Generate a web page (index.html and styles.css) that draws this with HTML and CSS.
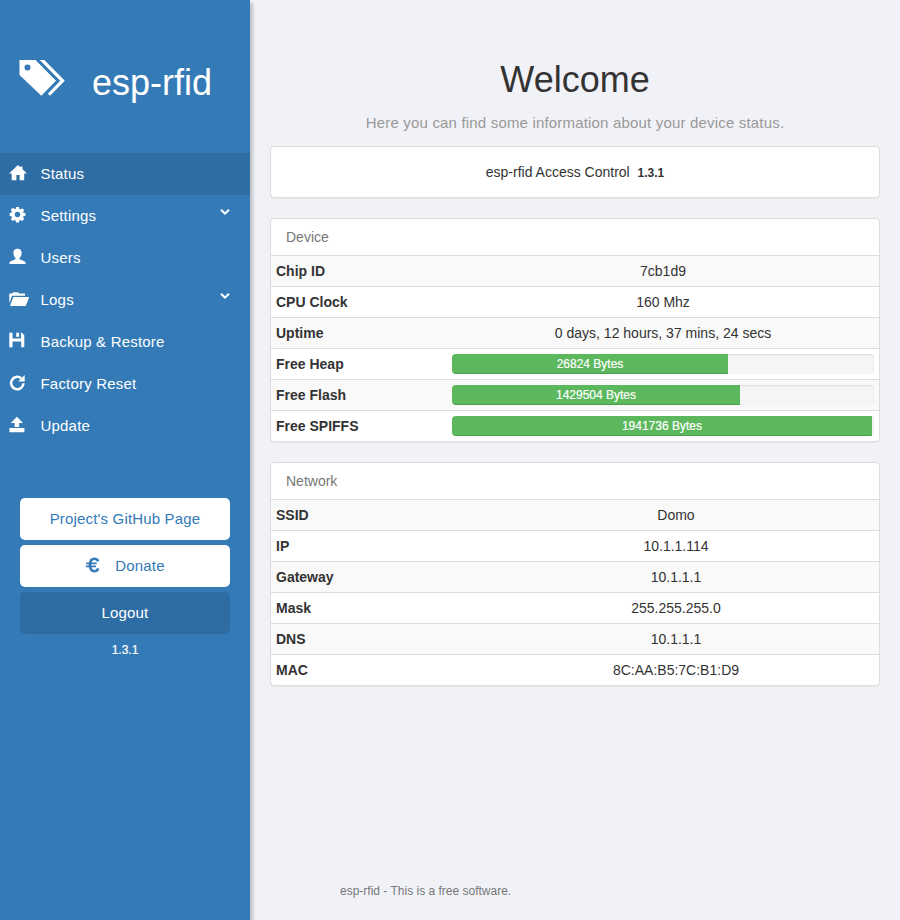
FILE: index.html
```html
<!DOCTYPE html>
<html lang="en">
<head>
<meta charset="utf-8">
<title>esp-rfid</title>
<link rel="stylesheet" href="styles.css">
</head>
<body>
<div class="layout">
  <nav class="sidebar">
    <header class="brand">
      <svg class="brand-icon" viewBox="0 0 48 38"><path fill-rule="evenodd" d="M1.5 1H17.5L38 21.7L23.3 36.8L1.5 16ZM9.5 5.5a3 3 0 1 0 0 6a3 3 0 1 0 0-6Z"/><path d="M21.7 1H26.3L46.8 21.8L32 36.8L29.8 34.7L42.2 21.7Z"/></svg>
      <h1>esp-rfid</h1>
    </header>
    <ul class="menu">
      <li class="active"><svg class="icon" viewBox="0 0 22 20"><path d="M10 1L12.2 3.2V2.5H14.5V5.2L19 9.4H16.2V16.2H11.6V11H8.4V16.2H3.7V9.4H1Z"/></svg>Status</li>
      <li><svg class="icon" viewBox="0 0 22 20"><path fill-rule="evenodd" d="M8 1h3l.4 2 1.1.5 1.7-1.2 2 2-1.1 1.8.4 1L17.4 7v2.9l-1.9.4-.4 1.1 1.1 1.7-2 2-1.7-1.1-1.1.5-.4 2H8l-.4-2-1.1-.5-1.7 1.1-2-2 1.1-1.7-.4-1.1L1.7 9.9V7l1.8-.4.4-1-1.1-1.8 2-2 1.7 1.2L7.6 3ZM9.5 5.8a2.7 2.7 0 1 0 0 5.4a2.7 2.7 0 1 0 0-5.4Z"/></svg>Settings<svg class="chevron" viewBox="0 0 10 8"><path d="M1 1.7L5 5.7L9 1.7"/></svg></li>
      <li><svg class="icon" viewBox="0 0 22 20"><path d="M9.5 .8C12 .8 13.8 2.3 13.6 5C13.5 7.3 12.8 8.8 11.5 10V11.3L15.8 13Q17.6 13.7 17.6 15V16H1.4V15Q1.4 13.7 3.2 13L7.5 11.3V10C6.2 8.8 5.5 7.3 5.4 5C5.2 2.3 7 .8 9.5 .8Z"/></svg>Users</li>
      <li><svg class="icon" viewBox="0 0 22 20"><path d="M1.3 3.5H4.3L5 2.2H10.2L11 3.5H17V5.8H5Q4 5.8 3.6 6.8L1.3 13.5ZM5.3 7H21.3L17.7 16H2Z"/></svg>Logs<svg class="chevron" viewBox="0 0 10 8"><path d="M1 1.7L5 5.7L9 1.7"/></svg></li>
      <li><svg class="icon" viewBox="0 0 22 20"><path d="M1.3 .8H4.5V6.5H13V.8H13.8L16.3 3.3V15.3H13.2V9.5H4.5V15.3H1.3ZM8.2 .8H11.2V4.8H8.2Z"/></svg>Backup &amp; Restore</li>
      <li><svg class="icon" viewBox="0 0 22 20"><path class="stroke" d="M13.2 4.2A6.2 6.2 0 1 0 15.5 9.2"/><path d="M16.7 1V7.5H10.2Z"/></svg>Factory Reset</li>
      <li><svg class="icon" viewBox="0 0 22 20"><path d="M8.9 .8L15 7H11.2V11.1H6.6V7H2.8ZM1.4 12H16.4V16.3H1.4Z"/></svg>Update</li>
    </ul>
    <div class="actions">
      <a class="button">Project's GitHub Page</a>
      <a class="button"><svg class="euro" viewBox="0 0 16 18"><path d="M13.2 5.4Q12.4 2.8 9.4 2.8Q5.2 2.8 5 9Q5.2 15.2 9.4 15.2Q12.4 15.2 13.2 12.4"/><path class="bar" d="M1.3 7.4H11.7M.8 10.4H11"/></svg>Donate</a>
      <a class="button dark">Logout</a>
      <small>1.3.1</small>
    </div>
  </nav>
  <main class="content">
    <h2>Welcome</h2>
    <p class="lead">Here you can find some information about your device status.</p>
    <section class="panel summary">esp-rfid Access Control&nbsp; <b>1.3.1</b></section>
    <section class="panel">
      <h3>Device</h3>
      <dl class="device">
        <div><dt>Chip ID</dt><dd>7cb1d9</dd></div>
        <div><dt>CPU Clock</dt><dd>160 Mhz</dd></div>
        <div><dt>Uptime</dt><dd>0 days, 12 hours, 37 mins, 24 secs</dd></div>
        <div><dt>Free Heap</dt><dd><div class="progress"><div class="fill" style="width:65.4%">26824 Bytes</div></div></dd></div>
        <div><dt>Free Flash</dt><dd><div class="progress"><div class="fill" style="width:68.25%">1429504 Bytes</div></div></dd></div>
        <div><dt>Free SPIFFS</dt><dd><div class="progress"><div class="fill" style="width:99.5%">1941736 Bytes</div></div></dd></div>
      </dl>
    </section>
    <section class="panel">
      <h3>Network</h3>
      <dl class="network">
        <div><dt>SSID</dt><dd>Domo</dd></div>
        <div><dt>IP</dt><dd>10.1.1.114</dd></div>
        <div><dt>Gateway</dt><dd>10.1.1.1</dd></div>
        <div><dt>Mask</dt><dd>255.255.255.0</dd></div>
        <div><dt>DNS</dt><dd>10.1.1.1</dd></div>
        <div><dt>MAC</dt><dd>8C:AA:B5:7C:B1:D9</dd></div>
      </dl>
    </section>
    <footer>esp-rfid - This is a free software.</footer>
  </main>
</div>
</body>
</html>
```
FILE: styles.css
```css
* { box-sizing: border-box; }
body {
  margin: 0;
  background: #f1f2f7;
  color: #333;
  font: 14px/20px "Liberation Sans", Arial, sans-serif;
}
h1, h2, h3, p, ul, dl, dd { margin: 0; padding: 0; font-weight: 400; }
.layout { display: flex; height: 920px; }
.sidebar {
  width: 250px;
  flex: none;
  background: #337ab7;
  color: #fff;
  box-shadow: 3px 3px 3px rgba(0, 0, 0, .2);
}
.brand { display: flex; height: 153px; padding: 59px 0 0 18px; }
.brand-icon { width: 48px; height: 38px; fill: #fff; }
.brand h1 { margin-left: 26px; font-size: 36px; line-height: 48px; }
.menu { list-style: none; }
.menu li {
  display: flex;
  height: 42px;
  padding: 11px 20px 0 8px;
  font-size: 15px;
  line-height: 19px;
  letter-spacing: .2px;
}
.menu .active { background: #2e6da4; }
.icon { width: 22px; height: 20px; margin-right: 10.5px; fill: #fff; }
.stroke { fill: none; stroke: #fff; stroke-width: 2.5; }
.chevron { width: 10px; height: 8px; margin: 2px 0 0 auto; fill: none; stroke: #fff; stroke-width: 2; }
.actions { display: flex; flex-direction: column; gap: 5px; padding: 51px 20px 0; text-align: center; }
.button {
  display: flex;
  align-items: center;
  justify-content: center;
  height: 42px;
  border-radius: 5px;
  background: #fff;
  color: #337ab7;
  font-size: 15px;
  letter-spacing: .17px;
}
.dark { background: #2e6da4; color: #fff; }
.euro { width: 16px; height: 18px; margin: -2px 14px 0 0; fill: none; stroke: #337ab7; stroke-width: 2.6; }
.euro .bar { stroke-width: 1.6; }
.actions small { font-size: 12px; line-height: 22px; -webkit-text-stroke: .2px #fff; }
.content { display: flex; flex: 1; flex-direction: column; padding: 60px 20px 0; }
h2 { font-size: 36px; line-height: 40px; text-align: center; }
.lead { margin: 13px 0; color: #999; font-size: 15px; letter-spacing: .18px; text-align: center; }
.panel {
  margin-bottom: 20px;
  border: 1px solid #ddd;
  border-radius: 4px;
  background: #fff;
  box-shadow: 0 1px 1px rgba(0, 0, 0, .05);
}
.summary { padding: 15px; text-align: center; }
.summary b { font-size: 12px; line-height: 1; }
h3 { padding: 10px 15px; color: #777; font-size: 14px; line-height: 16px; }
dl > div { display: flex; border-top: 1px solid #ddd; }
dl > div:nth-child(odd) { background: #f9f9f9; }
dt { padding: 5px; font-weight: 700; }
dd { flex: 1; padding: 5px; text-align: center; }
.device dt { width: 176px; }
.network dt { width: 202px; }
.progress {
  height: 20px;
  overflow: hidden;
  border-radius: 4px;
  background: #f5f5f5;
  box-shadow: inset 0 1px 2px rgba(0, 0, 0, .1);
}
.fill {
  height: 20px;
  background: #5cb85c;
  color: #fff;
  font-size: 12px;
  -webkit-text-stroke: .2px #fff;
  box-shadow: inset 0 -1px 0 rgba(0, 0, 0, .15);
}
footer { margin: auto 0 19px 70px; color: #777; font-size: 12px; }
```
